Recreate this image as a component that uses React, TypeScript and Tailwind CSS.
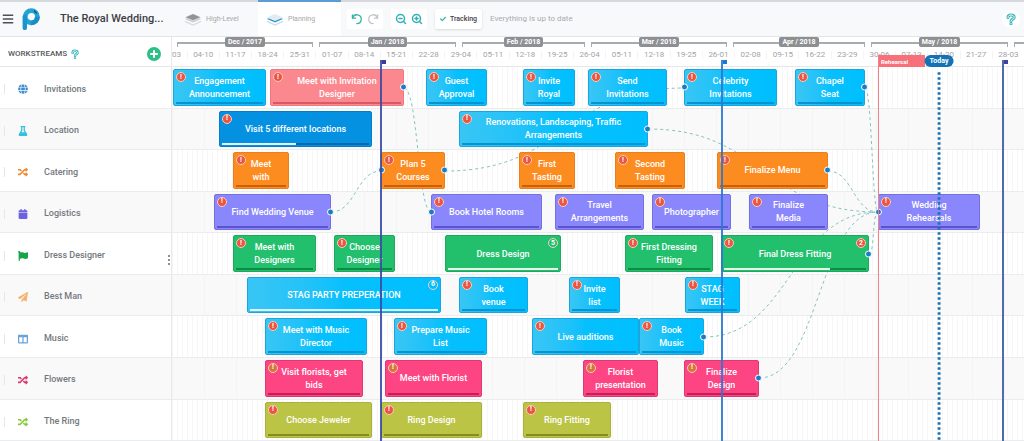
import type { ReactNode } from "react";
import type { IconType } from "react-icons";
import {
  FaBars,
  FaCalendar,
  FaCheck,
  FaColumns,
  FaFlag,
  FaFlask,
  FaGlobe,
  FaPaperPlane,
  FaRandom,
} from "react-icons/fa";
import { ZoomIn, ZoomOut } from "lucide-react";

type Tone = "sky" | "blue" | "coral" | "orange" | "violet" | "green" | "pink" | "olive";

interface Task {
  label: string;
  start: number;
  end: number;
  tone?: Tone;
  alert?: boolean;
  soft?: boolean;
  count?: number;
  late?: boolean;
  progress?: number;
  linkIn?: boolean;
  linkOut?: boolean;
}

interface Workstream {
  name: string;
  icon: IconType;
  iconClass: string;
  tone: Tone;
  tasks: Task[];
}

// Length of the visible time range; every start and end is measured on it
const RANGE = 852;

const toneClasses: Record<Tone, { bar: string; track: string }> = {
  sky: {
    bar: "border-[#1aa5dc] bg-linear-to-r from-[#38c6f4] via-[#06c0fc] to-[#00bfff]",
    track: "bg-[#0693cf]",
  },
  blue: { bar: "border-[#0a7cc4] bg-[#0591e2]", track: "bg-[#0668ab]" },
  coral: { bar: "border-[#f0787e] bg-[#fb888e]", track: "bg-[#d95a64]" },
  orange: { bar: "border-[#e9801c] bg-[#fd8c20]", track: "bg-[#c9600c]" },
  violet: { bar: "border-[#7470e2] bg-[#8a86fb]", track: "bg-[#5a54cc]" },
  green: { bar: "border-[#1ea95f] bg-[#22bf6d]", track: "bg-[#0f8a45]" },
  pink: { bar: "border-[#dd3a74] bg-[#fd4583]", track: "bg-[#c41f58]" },
  olive: { bar: "border-[#aab03a] bg-[#bcc445]", track: "bg-[#878c1e]" },
};

const workstreams: Workstream[] = [
  {
    name: "Invitations",
    icon: FaGlobe,
    iconClass: "text-[#3f8fd0]",
    tone: "sky",
    tasks: [
      { label: "Engagement\nAnnouncement", start: 1, end: 94, alert: true },
      { label: "Meet with Invitation\nDesigner", start: 98, end: 232, tone: "coral", alert: true, linkOut: true },
      { label: "Guest\nApproval", start: 254, end: 315, alert: true },
      { label: "Invite\nRoyal", start: 351, end: 403, alert: true },
      { label: "Send\nInvitations", start: 416, end: 495, alert: true },
      { label: "Celebrity\nInvitations", start: 512, end: 605, alert: true, linkIn: true },
      { label: "Chapel\nSeat", start: 623, end: 693, alert: true, linkOut: true },
    ],
  },
  {
    name: "Location",
    icon: FaFlask,
    iconClass: "text-[#2fc4dc]",
    tone: "sky",
    tasks: [
      { label: "Visit 5 different locations", start: 47, end: 200, tone: "blue", alert: true, progress: 50 },
      { label: "Renovations, Landscaping, Traffic\nArrangements", start: 287, end: 476, alert: true, linkOut: true },
    ],
  },
  {
    name: "Catering",
    icon: FaRandom,
    iconClass: "text-[#ee8a33]",
    tone: "orange",
    tasks: [
      { label: "Meet\nwith", start: 61, end: 117, alert: true },
      { label: "Plan 5\nCourses", start: 209, end: 273, alert: true, linkIn: true, linkOut: true },
      { label: "First\nTasting", start: 347, end: 403, alert: true },
      { label: "Second\nTasting", start: 443, end: 513, alert: true },
      { label: "Finalize Menu", start: 545, end: 656, alert: true, linkOut: true },
    ],
  },
  {
    name: "Logistics",
    icon: FaCalendar,
    iconClass: "text-[#6c63e0]",
    tone: "violet",
    tasks: [
      { label: "Find Wedding Venue", start: 42, end: 159, alert: true, linkOut: true },
      { label: "Book Hotel Rooms", start: 259, end: 370, alert: true, linkIn: true },
      { label: "Travel\nArrangements", start: 383, end: 472, alert: true },
      { label: "Photographer", start: 480, end: 559, alert: true },
      { label: "Finalize\nMedia", start: 577, end: 656, alert: true },
      { label: "Wedding\nRehearsals", start: 706, end: 808, alert: true, linkIn: true },
    ],
  },
  {
    name: "Dress Designer",
    icon: FaFlag,
    iconClass: "text-[#16a54c]",
    tone: "green",
    tasks: [
      { label: "Meet with\nDesigners", start: 61, end: 144, alert: true },
      { label: "Choose\nDesigner", start: 162, end: 223, alert: true },
      { label: "Dress Design", start: 273, end: 389, count: 5, progress: 100 },
      { label: "First Dressing\nFitting", start: 453, end: 541, alert: true },
      { label: "Final Dress Fitting", start: 549, end: 697, alert: true, count: 2, late: true, progress: 75, linkOut: true },
    ],
  },
  {
    name: "Best Man",
    icon: FaPaperPlane,
    iconClass: "text-[#f6b26b]",
    tone: "sky",
    tasks: [
      { label: "STAG PARTY PREPERATION", start: 75, end: 269, count: 6, progress: 100 },
      { label: "Book\nvenue", start: 287, end: 356, alert: true },
      { label: "Invite\nlist", start: 397, end: 448, alert: true },
      { label: "STAG\nWEEK", start: 513, end: 568, alert: true },
    ],
  },
  {
    name: "Music",
    icon: FaColumns,
    iconClass: "text-[#6aa3dc]",
    tone: "sky",
    tasks: [
      { label: "Meet with Music\nDirector", start: 93, end: 195, alert: true },
      { label: "Prepare Music\nList", start: 222, end: 315, alert: true },
      { label: "Live auditions", start: 360, end: 467, alert: true },
      { label: "Book\nMusic", start: 467, end: 532, alert: true, linkOut: true },
    ],
  },
  {
    name: "Flowers",
    icon: FaRandom,
    iconClass: "text-[#dd3a6c]",
    tone: "pink",
    tasks: [
      { label: "Visit florists, get\nbids", start: 93, end: 191, alert: true, soft: true },
      { label: "Meet with Florist", start: 213, end: 310, alert: true, soft: true },
      { label: "Florist\npresentation", start: 411, end: 486, alert: true, soft: true },
      { label: "Finalize\nDesign", start: 512, end: 587, alert: true, soft: true, linkOut: true },
    ],
  },
  {
    name: "The Ring",
    icon: FaRandom,
    iconClass: "text-[#8cc63c]",
    tone: "olive",
    tasks: [
      { label: "Choose Jeweler", start: 93, end: 200, alert: true },
      { label: "Ring Design", start: 209, end: 310, alert: true },
      { label: "Ring Fitting", start: 351, end: 439, alert: true },
    ],
  },
];

const months = [
  { label: "Dec / 2017", span: 136 },
  { label: "Jan / 2018", span: 137 },
  { label: "Feb / 2018", span: 123 },
  { label: "Mar / 2018", span: 136 },
  { label: "Apr / 2018", span: 132 },
  { label: "May / 2018", span: 137 },
  { label: "", span: 10 },
];

const weeks = [
  "04-10", "11-17", "18-24", "25-31", "01-07", "08-14", "15-21", "22-28", "29-04",
  "05-11", "12-18", "19-25", "26-04", "05-11", "12-18", "19-25", "26-01", "02-08",
  "09-15", "16-22", "23-29", "30-06", "07-13", "14-20", "21-27", "28-03",
];

// Dependencies, drawn from the end of one task to the start of the next
const links = [
  "M232 21 C246 21 246 145 259 145",
  "M159 145 C184 145 184 104 209 104",
  "M273 104 C393 104 393 21 512 21",
  "M476 62 C591 62 591 145 706 145",
  "M656 104 C681 104 681 145 706 145",
  "M693 21 C700 21 700 145 706 145",
  "M697 187 C703 187 700 145 706 145",
  "M532 270 C619 270 619 145 706 145",
  "M587 311 C647 311 647 145 706 145",
];

const milestones = [
  { at: 208, line: "bg-[#3b4aa6]", flag: "bg-[#3a3c9c]" },
  { at: 549, line: "bg-[#2a78d0]", flag: "bg-[#1a78d6]" },
  { at: 830, line: "bg-[#3d5ba8]", flag: "bg-[#45409c]" },
];

const toPercent = (value: number) => `${(value / RANGE) * 100}%`;

export default function App() {
  return (
    <div className="flex min-h-screen flex-col overflow-hidden bg-white font-[Roboto,sans-serif] text-[#555b63]">
      <Toolbar />
      <main className="flex flex-1">
        <Sidebar />
        <Timeline />
      </main>
    </div>
  );
}

function Toolbar() {
  return (
    <header className="flex h-[37px] shrink-0 items-stretch border-t-2 border-b border-t-[#d6d8dc] border-b-[#e2e4e7] bg-[#f8f9fb]">
      <div className="flex w-[172px] shrink-0 items-center pl-0.5">
        <button aria-label="Menu" className="text-[#4c4f54]">
          <FaBars className="size-3" />
        </button>
        <Logo />
        <h1 className="ml-5 text-[11px] font-medium text-[#3d4045]">
          The Royal Wedding...
        </h1>
      </div>
      <nav className="flex shrink-0">
        <a href="#high-level" className="flex w-[86px] items-center gap-1 pl-3 text-[7px] text-[#a3a6aa]">
          <LayersIcon top="#8f9296" middle="#c9cccf" bottom="#d8dadd" />
          High-Level
        </a>
        <a
          href="#planning"
          className="-mt-0.5 flex w-[83px] items-center gap-1 border-t-2 border-[#5a9bd8] bg-white pl-2 text-[7px] text-[#a3a6aa]"
        >
          <LayersIcon top="#e3ebf0" middle="#2f9fd0" bottom="#cfdbe4" />
          Planning
        </a>
      </nav>
      <div className="flex items-center gap-2 pl-1.5">
        <div className="flex h-5 w-9 items-center justify-around rounded-xs bg-white px-0.5">
          <button aria-label="Undo" className="text-[#35b3a6]">
            <UndoIcon className="size-3" />
          </button>
          <button aria-label="Redo" className="text-[#c3c6c9]">
            <UndoIcon className="size-3 -scale-x-100" />
          </button>
        </div>
        <div className="flex h-5 w-9 items-center justify-around rounded-xs bg-white px-0.5 text-[#2fb0b4]">
          <button aria-label="Zoom out">
            <ZoomOut className="size-3" strokeWidth={3} />
          </button>
          <button aria-label="Zoom in">
            <ZoomIn className="size-3" strokeWidth={3} />
          </button>
        </div>
        <button className="flex h-5 w-[47px] items-center justify-center gap-1 rounded-xs bg-white text-[7px] font-medium text-[#3f4247] shadow-sm">
          <FaCheck className="size-1.5 text-[#35b3a6]" />
          Tracking
        </button>
        <p className="text-[8px] text-[#a8abaf]">Everything is up to date</p>
      </div>
      <button
        aria-label="Help"
        className="mr-1 ml-auto flex size-[18px] items-center justify-center self-center rounded-full bg-white"
      >
        <HelpIcon className="h-3 w-2.5" />
      </button>
    </header>
  );
}

function Sidebar() {
  return (
    <aside className="relative flex w-[172px] shrink-0 flex-col border-r border-[#e8e9eb]">
      <header className="flex h-[30px] items-center border-b border-[#e6e7e9] pt-1 pr-2.5 pl-2">
        <h2 className="text-[8px] font-medium text-[#55585d]">WORKSTREAMS</h2>
        <HelpIcon className="ml-1 h-2.5 w-2" />
        <button
          aria-label="Add workstream"
          className="ml-auto flex size-3.5 items-center justify-center rounded-full bg-[#2ebf86]"
        >
          <svg viewBox="0 0 10 10" className="size-2.5">
            <path d="M5 1.2v7.6M1.2 5h7.6" stroke="white" strokeWidth="2" />
          </svg>
        </button>
      </header>
      <ul className="flex flex-1 flex-col">
        {workstreams.map(({ name, icon: Icon, iconClass }) => (
          <li
            key={name}
            className="flex min-h-10 flex-1 items-center border-b border-[#ebecee] pt-1 even:bg-[#f9f9fa]"
          >
            <span className="ml-1 h-2.5 border-l border-[#e6e7e9]" />
            <Icon className={`ml-[13px] size-2.5 ${iconClass}`} />
            <span className="ml-4 text-[9px] font-medium text-[#74787d]">{name}</span>
          </li>
        ))}
      </ul>
      {/* Grip of the column divider */}
      <div className="absolute top-[218px] right-px flex gap-px">
        <span className="h-2.5 w-0.5 bg-[repeating-linear-gradient(#8c8f94_0_2px,transparent_2px_4px)]" />
      </div>
    </aside>
  );
}

function Timeline() {
  return (
    <section className="relative flex min-w-0 flex-1 flex-col">
      <Calendar />
      <div className="relative flex flex-1 flex-col">
        {workstreams.map((stream) => (
          <TrackRow key={stream.name} stream={stream} />
        ))}
        <svg
          viewBox="0 0 852 374"
          preserveAspectRatio="none"
          className="pointer-events-none absolute inset-0 z-10 size-full"
        >
          {links.map((d) => (
            <path key={d} d={d} fill="none" stroke="#85c4bb" strokeWidth="1" strokeDasharray="3 3" />
          ))}
        </svg>
      </div>
      <Markers />
    </section>
  );
}

function Calendar() {
  return (
    <header className="flex h-[30px] shrink-0 flex-col overflow-hidden border-b border-[#e6e7e9]">
      <div className="ml-[5px] flex h-2.5 gap-1.5">
        {months.map(({ label, span }) => (
          <div key={label} className="flex min-w-0 basis-0 items-center" style={{ flexGrow: span }}>
            <span className="mt-1 h-[5px] flex-1 border-t-2 border-l border-[#a9abae]" />
            {label && (
              <>
                <span className="flex h-2.5 items-center rounded-xs bg-[#8d8f92] px-[3px] text-[7px] font-bold whitespace-nowrap text-white">
                  {label}
                </span>
                <span className="mt-1 h-[5px] flex-1 border-t-2 border-r border-[#a9abae]" />
              </>
            )}
          </div>
        ))}
      </div>
      <div className="flex h-4 items-center text-[8px] leading-none text-[#a2a4a8]">
        <span className="min-w-0 basis-0" style={{ flexGrow: 15 }}>
          03
        </span>
        {weeks.map((week, i) => (
          <span
            key={i}
            className="flex min-w-0 basis-0 justify-center border-l border-[#f4f4f5]"
            style={{ flexGrow: 32 }}
          >
            {week}
          </span>
        ))}
      </div>
    </header>
  );
}

function TrackRow({ stream }: { stream: Workstream }) {
  return (
    <div className="flex min-h-10 flex-1 border-b border-[#ebecee] bg-[repeating-linear-gradient(90deg,#f6f6f7_0_1px,transparent_1px_5px)] py-0.5 even:bg-[#f9f9fa] even:bg-[repeating-linear-gradient(90deg,#f4f4f5_0_1px,transparent_1px_32px)]">
      {stream.tasks.map((task, i) => {
        const previousEnd = i === 0 ? 0 : stream.tasks[i - 1].end;
        return (
          <TaskBar
            key={task.label}
            task={task}
            tone={task.tone ?? stream.tone}
            offset={task.start - previousEnd}
          />
        );
      })}
    </div>
  );
}

function TaskBar({ task, tone, offset }: { task: Task; tone: Tone; offset: number }) {
  const { bar, track } = toneClasses[tone];

  return (
    <button
      className={`relative z-20 flex shrink-0 flex-col items-center rounded-xs border px-0.5 pt-1 pb-px ${bar}`}
      style={{ marginLeft: toPercent(offset), width: toPercent(task.end - task.start) }}
    >
      <span className="flex flex-1 items-center text-center text-[9px] leading-[13px] font-medium whitespace-pre text-white">
        {task.label}
      </span>
      <span className={`flex h-0.5 w-full ${track}`}>
        {task.progress && (
          <span className="bg-white/90" style={{ width: `${task.progress}%` }} />
        )}
      </span>

      {task.alert && (
        <Badge className={task.soft ? "left-0.5 bg-[#d8763a]" : "left-0.5 bg-[#ea5643]"}>!</Badge>
      )}
      {task.count && (
        <Badge className={task.late ? "right-0.5 bg-[#ea5643]" : "right-0.5"}>{task.count}</Badge>
      )}
      {task.linkIn && <LinkDot className="-left-1" />}
      {task.linkOut && <LinkDot className="-right-1" />}
    </button>
  );
}

function Badge({ className, children }: { className: string; children: ReactNode }) {
  return (
    <span
      className={`absolute top-0.5 flex size-2.5 items-center justify-center rounded-full border border-[#f9cdb9] text-[7px] leading-none font-bold text-white ${className}`}
    >
      {children}
    </span>
  );
}

function LinkDot({ className }: { className: string }) {
  return (
    <span
      className={`absolute top-1/2 size-[7px] -translate-y-1/2 rounded-full border border-white bg-[#1a7cc4] ${className}`}
    />
  );
}

function Markers() {
  return (
    <div className="pointer-events-none absolute inset-x-0 top-[18px] bottom-0 z-30">
      {milestones.map(({ at, line, flag }) => (
        <div key={at} className="absolute inset-y-0 top-[5px] flex" style={{ left: toPercent(at) }}>
          <span className={`w-0.5 opacity-90 ${line}`} />
          <span className={`h-1 w-1 ${flag}`} />
        </div>
      ))}
      <div className="absolute inset-y-0 flex items-start" style={{ left: toPercent(706) }}>
        <span className="h-full w-px bg-[#f0808a]" />
        <span className="flex h-3 w-[46px] items-center bg-[#f8707a] pl-0.5 text-[6px] font-bold text-white">
          Rehearsal
        </span>
      </div>
      <div
        className="absolute inset-y-0 flex -translate-x-1/2 flex-col items-center gap-1"
        style={{ left: toPercent(767) }}
      >
        <span className="flex h-3 items-center rounded-full bg-[#1272b4] px-[5px] text-[7px] font-bold text-white">
          Today
        </span>
        <span className="w-[3px] flex-1 bg-[radial-gradient(circle,#1f74b0_1px,transparent_2px)] bg-size-[3px_5px]" />
      </div>
    </div>
  );
}

function Logo() {
  return (
    <svg viewBox="0 0 18 23" className="ml-2 h-[23px] w-[18px]">
      <circle cx="9.3" cy="8.7" r="6.1" fill="none" stroke="#22a5d6" strokeWidth="4.8" />
      <path d="M2.8 8.7v11.2" stroke="#1b93cb" strokeWidth="4.4" strokeLinecap="round" />
      <path d="M9.3 14.8a6.1 6.1 0 0 0 6.1-6.1" fill="none" stroke="#1b8cc4" strokeWidth="4.8" />
      <path d="m12.4 3 2 2" stroke="#17526f" strokeWidth="1.4" strokeLinecap="round" />
    </svg>
  );
}

function UndoIcon({ className }: { className: string }) {
  return (
    <svg
      viewBox="0 0 12 12"
      className={className}
      fill="none"
      stroke="currentColor"
      strokeWidth="1.3"
      strokeLinecap="round"
      strokeLinejoin="round"
    >
      <path d="M1.4 2v3.200h3.200" />
      <path d="M1.600 5A4.400 4.400 0 1 1 5.800 10.600" />
    </svg>
  );
}

function LayersIcon({ top, middle, bottom }: { top: string; middle: string; bottom: string }) {
  return (
    <svg viewBox="0 0 18 13" className="h-[13px] w-[18px]">
      <path d="m1 8.4 8 3.6 8-3.6" fill="none" stroke={bottom} strokeWidth="1.3" />
      <path d="m1 6 8 3.6L17 6l-2-1-6 2.6L3 5z" fill={middle} />
      <path d="m9 .8 8 3.4-8 3.4-8-3.4z" fill={top} stroke="white" strokeWidth=".4" />
    </svg>
  );
}

function HelpIcon({ className }: { className: string }) {
  const hook = "M2 4.6C2 2.8 3.2 2 5 2s3.2 1 3.2 2.6C8.2 6.4 5 6 5 8.2M5 10.2v.6";
  return (
    <svg viewBox="0 0 10 12" className={className} fill="none" strokeLinecap="round">
      <path d={hook} stroke="#35b5bd" strokeWidth="3" />
      <path d={hook} stroke="white" strokeWidth="1" />
    </svg>
  );
}
